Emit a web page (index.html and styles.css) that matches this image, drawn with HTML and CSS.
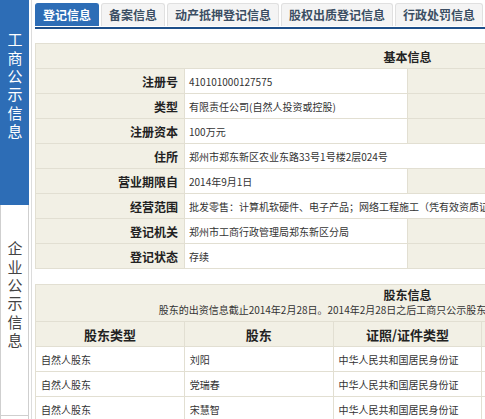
FILE: index.html
```html
<!DOCTYPE html>
<html lang="zh-CN">
<head>
<meta charset="utf-8">
<title>企业信用信息公示</title>
<link rel="stylesheet" href="styles.css">
</head>
<body>
<div class="page">
  <aside class="side">
    <div class="side-item side-active">工商公示信息</div>
    <div class="side-item side-normal">企业公示信息</div>
    <div class="side-item side-more"></div>
  </aside>
  <main class="main">
    <nav class="tabs">
      <span class="tab tab-active">登记信息</span>
      <span class="tab">备案信息</span>
      <span class="tab">动产抵押登记信息</span>
      <span class="tab">股权出质登记信息</span>
      <span class="tab">行政处罚信息</span>
      <span class="tab">经营异常信息</span>
    </nav>
    <table class="info">
      <colgroup><col class="c-l"><col class="c-v"><col class="c-l"><col class="c-v"></colgroup>
      <tr><th colspan="4" class="title">基本信息</th></tr>
      <tr><th>注册号</th><td>410101000127575</td><th>名称</th><td>河南省某某科技有限公司</td></tr>
      <tr><th>类型</th><td>有限责任公司(自然人投资或控股)</td><th>法定代表人</th><td>刘阳</td></tr>
      <tr><th>注册资本</th><td>100万元</td><th>成立日期</th><td>2014年9月1日</td></tr>
      <tr><th>住所</th><td colspan="3">郑州市郑东新区农业东路33号1号楼2层024号</td></tr>
      <tr><th>营业期限自</th><td>2014年9月1日</td><th>营业期限至</th><td></td></tr>
      <tr><th>经营范围</th><td colspan="3">批发零售：计算机软硬件、电子产品；网络工程施工（凭有效资质证经营）；计算机技术服务。</td></tr>
      <tr><th>登记机关</th><td>郑州市工商行政管理局郑东新区分局</td><th>核准日期</th><td>2014年9月1日</td></tr>
      <tr><th>登记状态</th><td>存续</td><th></th><td></td></tr>
    </table>
    <table class="holders">
      <colgroup><col><col><col><col><col></colgroup>
      <tr><th colspan="5" class="title2"><div class="t2">股东信息</div><div class="sub">股东的出资信息截止2014年2月28日。2014年2月28日之后工商只公示股东姓名，其他出资信息由企业自行公示。</div></th></tr>
      <tr class="head"><th>股东类型</th><th>股东</th><th>证照/证件类型</th><th>证照/证件号码</th><th>详情</th></tr>
      <tr><td>自然人股东</td><td>刘阳</td><td>中华人民共和国居民身份证</td><td></td><td></td></tr>
      <tr><td>自然人股东</td><td>党瑞春</td><td>中华人民共和国居民身份证</td><td></td><td></td></tr>
      <tr><td>自然人股东</td><td>宋慧智</td><td>中华人民共和国居民身份证</td><td></td><td></td></tr>
    </table>
  </main>
</div>
</body>
</html>
```
FILE: styles.css
```css
html, body {
  margin: 0;
  padding: 0;
  overflow: hidden;
  background: #fff;
}
body {
  font-family: "Noto Sans CJK SC", "Noto Sans", sans-serif;
  color: #333;
}
.page {
  display: flex;
  align-items: flex-start;
  width: 800px;
}
.side {
  flex: 0 0 31px;
  width: 31px;
  border-right: 1px solid #dcdcdc;
  min-height: 419px;
  display: flex;
  flex-direction: column;
}
.side-item {
  width: 29px;
  box-sizing: border-box;
  display: flex;
  align-items: center;
  justify-content: flex-start;
  writing-mode: vertical-rl;
  text-orientation: upright;
  font-size: 15px;
  letter-spacing: 3.4px;
  line-height: 16px;
}
.side-active {
  height: 205px;
  background: #2d6db6;
  color: #fff;
  padding-top: 32px;
}
.side-normal {
  height: 211px;
  border: 1px solid #cfcfcf;
  border-top: none;
  color: #444;
  padding-top: 36px;
}
.side-more {
  height: 20px;
  border: 1px solid #cfcfcf;
  border-top: none;
}
.main {
  margin-left: 3px;
  padding-top: 3px;
  flex: 0 0 auto;
}
.tabs {
  display: flex;
  white-space: nowrap;
  border-bottom: 2px solid #1d4f8a;
  height: 24px;
  width: 760px;
  gap: 2px;
}
.tab {
  box-sizing: border-box;
  height: 23px;
  padding: 0 7px;
  font-size: 12px;
  font-weight: bold;
  line-height: 22px;
  color: #3b4e63;
  background: #f4f4f4;
  border: 1px solid #e0e0e0;
  border-bottom: none;
  border-radius: 3px 3px 0 0;
}
.tab-active {
  background: #2d6db6;
  border-color: #2d6db6;
  color: #fff;
}
table {
  border-collapse: collapse;
  width: 745px;
  table-layout: fixed;
}
.info {
  margin-top: 14px;
}
.holders {
  margin-top: 15px;
}
.c-l { width: 149px; }
.c-v { width: 223px; }
th, td {
  border: 1px solid #e2dfd2;
  height: 25px;
  padding: 0 4px;
  box-sizing: border-box;
  white-space: nowrap;
  overflow: hidden;
}
.info th {
  background: #f2f0e5;
  text-align: right;
  font-size: 12px;
  font-weight: bold;
  color: #222;
  padding-right: 6px;
}
.info td {
  font-size: 10px;
  color: #333;
  text-align: left;
}
.info th.title {
  text-align: center;
  padding: 0;
}
.title2 {
  background: #f2f0e5;
  text-align: center;
  font-weight: normal;
  height: 37px;
  padding: 0;
}
.t2 {
  font-size: 12px;
  font-weight: bold;
  color: #222;
  line-height: 16px;
}
.sub {
  font-size: 10px;
  color: #333;
  line-height: 14px;
  margin-bottom: 2px;
}
.holders .head th {
  background: #f2f0e5;
  font-size: 13px;
  font-weight: bold;
  color: #222;
  text-align: center;
}
.holders td {
  font-size: 10px;
  text-align: left;
  padding-left: 5px;
}
```
